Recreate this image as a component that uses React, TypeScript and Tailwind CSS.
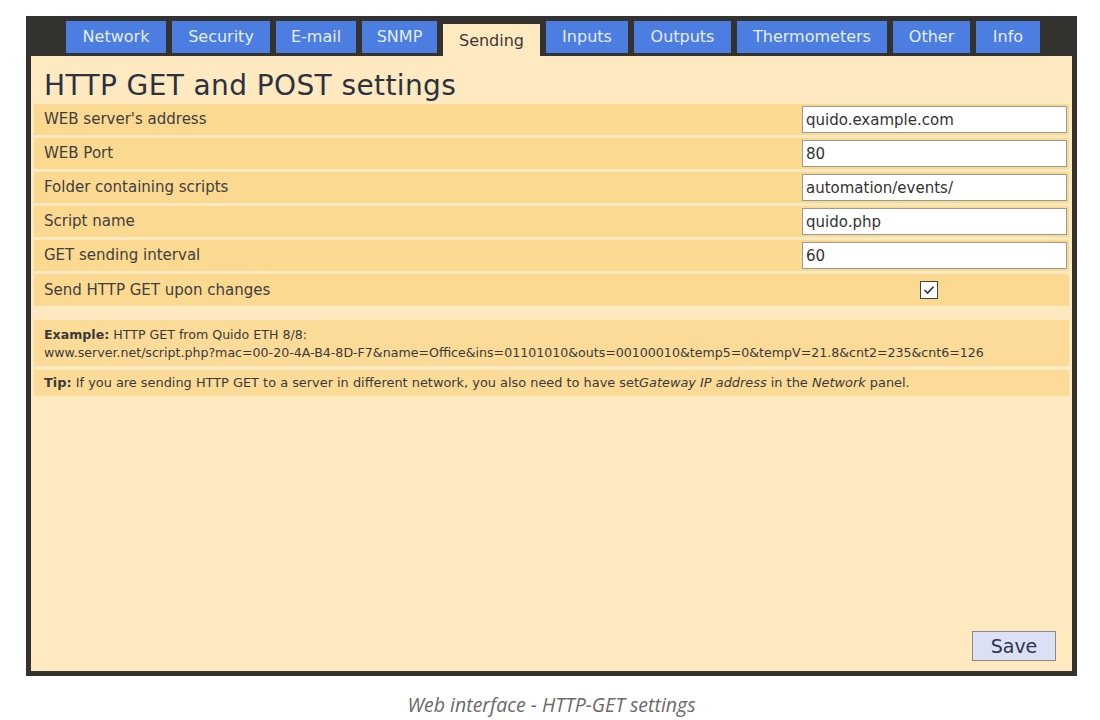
import React from 'react';

const tabs = [
  { name: 'Network', w: 'w-[100px]' },
  { name: 'Security', w: 'w-[98px]' },
  { name: 'E-mail', w: 'w-[80px]' },
  { name: 'SNMP', w: 'w-[75px]' },
  { name: 'Sending', w: 'w-[97px]', active: true },
  { name: 'Inputs', w: 'w-[82px]' },
  { name: 'Outputs', w: 'w-[97px]' },
  { name: 'Thermometers', w: 'w-[150px]' },
  { name: 'Other', w: 'w-[77px]' },
  { name: 'Info', w: 'w-[64px]' },
];

const fields = [
  { label: "WEB server's address", value: 'quido.example.com' },
  { label: 'WEB Port', value: '80' },
  { label: 'Folder containing scripts', value: 'automation/events/' },
  { label: 'Script name', value: 'quido.php' },
  { label: 'GET sending interval', value: '60' },
];

const font = { fontFamily: '"DejaVu Sans", Verdana, sans-serif' };

const Checkbox = () => (
  <div className="w-[18px] h-[18px] bg-white border border-[#444] flex items-center justify-center">
    <svg width="14" height="14" viewBox="0 0 14 14" fill="none">
      <path d="M2.5 7 L5.6 10 L11.5 3.8" stroke="#333" strokeWidth="1.6" />
    </svg>
  </div>
);

export default function App() {
  return (
    <div className="min-h-[720px] bg-white pt-[16px] pl-[26px]" style={font}>
      <div className="w-[1051px] h-[660px] bg-[#33322e] flex flex-col">
        <div className="h-[40px] flex items-start gap-[6px] pl-[40px] pt-[5px] shrink-0">
          {tabs.map(t =>
            t.active ? (
              <div
                key={t.name}
                className={`${t.w} h-[32px] mt-[3px] bg-[#fee9c1] flex items-center justify-center pt-[2px] text-[16px] text-[#3a3a3a]`}
              >
                {t.name}
              </div>
            ) : (
              <div
                key={t.name}
                className={`${t.w} h-[32px] bg-[#4b7ee0] flex items-center justify-center text-[16px] text-[#e4ecfb]`}
              >
                {t.name}
              </div>
            )
          )}
        </div>

        <div className="mx-[5px] mb-[5px] flex-1 bg-[#fee9c1] flex flex-col px-[3px]">
          <div className="h-[48px] pt-[13px] pl-[10px] text-[28px] leading-[34px] tracking-[0.4px] text-[#2d3140]">
            HTTP GET and POST settings
          </div>

          <div className="flex flex-col gap-[3px]">
            {fields.map(f => (
              <div key={f.label} className="h-[31px] bg-[#fbd990] flex items-center justify-between pr-[2px]">
                <span className="pl-[10px] text-[15px] text-[#404040]">{f.label}</span>
                <input
                  type="text"
                  defaultValue={f.value}
                  className="w-[265px] h-[27px] bg-white border border-[#9a9a9a] px-[3px] text-[15px] text-[#333] outline-none"
                  style={font}
                />
              </div>
            ))}
            <div className="h-[32px] bg-[#fbd990] flex items-center justify-between pr-[2px]">
              <span className="pl-[10px] text-[15px] text-[#404040]">Send HTTP GET upon changes</span>
              <div className="w-[265px] flex justify-center pr-[11px]">
                <Checkbox />
              </div>
            </div>
          </div>

          <div className="h-[14px]" />

          <div className="bg-[#fbdb97] px-[10px] pt-[6px] pb-[4px] text-[12.6px] leading-[18px] text-[#3a3a3a]">
            <div>
              <b>Example:</b> HTTP GET from Quido ETH 8/8:
            </div>
            <div>
              www.server.net/script.php?mac=00-20-4A-B4-8D-F7&amp;name=Office&amp;ins=01101010&amp;outs=00100010&amp;temp5=0&amp;tempV=21.8&amp;cnt2=235&amp;cnt6=126
            </div>
          </div>
          <div className="h-[4px]" />
          <div className="bg-[#fbdb97] h-[26px] flex items-center px-[10px] text-[12.9px] text-[#3a3a3a]">
            <span>
              <b>Tip:</b> If you are sending HTTP GET to a server in different network, you also need to have set
              <i>Gateway IP address</i> in the <i>Network</i> panel.
            </span>
          </div>

          <div className="flex-1" />

          <div className="flex justify-end pr-[13px] pb-[10px]">
            <button className="w-[84px] h-[30px] bg-[#dce0f4] border border-[#8a8a8a] text-[19px] text-[#2b3550]" style={font}>
              Save
            </button>
          </div>
        </div>
      </div>

      <div
        className="w-[1051px] text-center mt-[14px] text-[19.5px] italic text-[#6a6a6a]"
        style={{ fontFamily: '"Open Sans", sans-serif' }}
      >
        Web interface - HTTP-GET settings
      </div>
    </div>
  );
}
